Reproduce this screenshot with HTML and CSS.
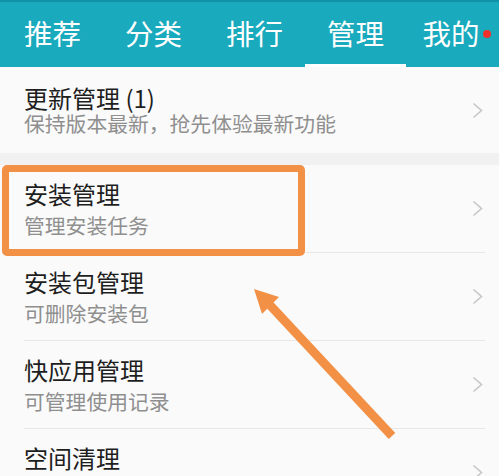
FILE: index.html
```html
<!DOCTYPE html>
<html lang="zh-CN">
<head>
    <meta charset="UTF-8">
    <meta name="viewport" content="width=device-width, initial-scale=1.0">
    <title>管理</title>
    <link rel="stylesheet" href="styles.css">
</head>
<body>
    <div class="tabs">
        <div class="tab">推荐</div>
        <div class="tab">分类</div>
        <div class="tab">排行</div>
        <div class="tab active">管理</div>
        <div class="tab">我的<span class="dot"></span></div>
    </div>

    <div class="list">
        <div class="item item-first">
            <div class="item-text">
                <div class="item-title">更新管理 (1)</div>
                <div class="item-sub">保持版本最新，抢先体验最新功能</div>
            </div>
            <svg class="chevron" viewBox="0 0 11 17"><polyline points="1.5,1.5 9.5,8.5 1.5,15.5"/></svg>
        </div>

        <div class="gap"></div>

        <div class="item">
            <div class="item-text">
                <div class="item-title">安装管理</div>
                <div class="item-sub">管理安装任务</div>
            </div>
            <svg class="chevron" viewBox="0 0 11 17"><polyline points="1.5,1.5 9.5,8.5 1.5,15.5"/></svg>
        </div>

        <div class="item">
            <div class="item-text">
                <div class="item-title">安装包管理</div>
                <div class="item-sub">可删除安装包</div>
            </div>
            <svg class="chevron" viewBox="0 0 11 17"><polyline points="1.5,1.5 9.5,8.5 1.5,15.5"/></svg>
        </div>

        <div class="item">
            <div class="item-text">
                <div class="item-title">快应用管理</div>
                <div class="item-sub">可管理使用记录</div>
            </div>
            <svg class="chevron" viewBox="0 0 11 17"><polyline points="1.5,1.5 9.5,8.5 1.5,15.5"/></svg>
        </div>

        <div class="item">
            <div class="item-text">
                <div class="item-title">空间清理</div>
                <div class="item-sub">清理手机空间</div>
            </div>
            <svg class="chevron" viewBox="0 0 11 17"><polyline points="1.5,1.5 9.5,8.5 1.5,15.5"/></svg>
        </div>
    </div>

    <!-- 标注：框和箭头 -->
    <div class="mark-box"></div>
    <svg class="mark-arrow" width="499" height="476" viewBox="0 0 499 476">
        <line x1="392" y1="436" x2="268" y2="303"/>
        <polygon points="254,289 279,297 262,314"/>
    </svg>
</body>
</html>
```

FILE: styles.css
```css
body {
    margin: 0;
    padding: 0;
    font-family: "Noto Sans CJK SC", "Noto Sans", sans-serif;
    background-color: #fafafa;
    overflow: hidden;
}

.tabs {
    display: grid;
    grid-template-columns: repeat(5, 101px);
    padding-left: 2px;
    height: 65px;
    border-top: 2px solid #1093a6;
    background-color: #19aabe;
}

.tab {
    display: flex;
    align-items: center;
    justify-content: center;
    padding-top: 1px;
    border-bottom: 3px solid transparent;
    color: #fff;
    font-size: 28.5px;
    line-height: 1;
}

.tab.active {
    border-bottom-color: #fff;
}

.dot {
    width: 8px;
    height: 8px;
    margin-left: 3px;
    border-radius: 50%;
    background-color: #f0302a;
}

.item {
    display: flex;
    align-items: center;
    margin: 0 14px 0 24px;
    height: 87px;
    border-bottom: 1px solid #e8e8e8;
}

.item-first {
    height: 86px;
    border-bottom: none;
}

.item-text {
    flex: 1;
}

.item-title {
    font-size: 24px;
    line-height: 30px;
    color: #1e1e1e;
}

.item-sub {
    margin-top: 2px;
    font-size: 20.8px;
    line-height: 28px;
    color: #8f8f8f;
}

.item-first .item-title {
    line-height: 26px;
}

.item-first .item-sub {
    margin-top: 0;
    line-height: 24px;
}

.gap {
    height: 12px;
    background-color: #f1f1f1;
}

.chevron {
    width: 11px;
    height: 17px;
    margin-right: 2px;
    fill: none;
    stroke: #c6c6c6;
    stroke-width: 1.6;
}

.mark-box {
    position: absolute;
    left: 2px;
    top: 165px;
    width: 289px;
    height: 77px;
    border: 7px solid #f29146;
    border-radius: 5px;
}

.mark-arrow {
    position: absolute;
    left: 0;
    top: 0;
}

.mark-arrow line {
    stroke: #f29146;
    stroke-width: 9;
}

.mark-arrow polygon {
    fill: #f29146;
}
```
